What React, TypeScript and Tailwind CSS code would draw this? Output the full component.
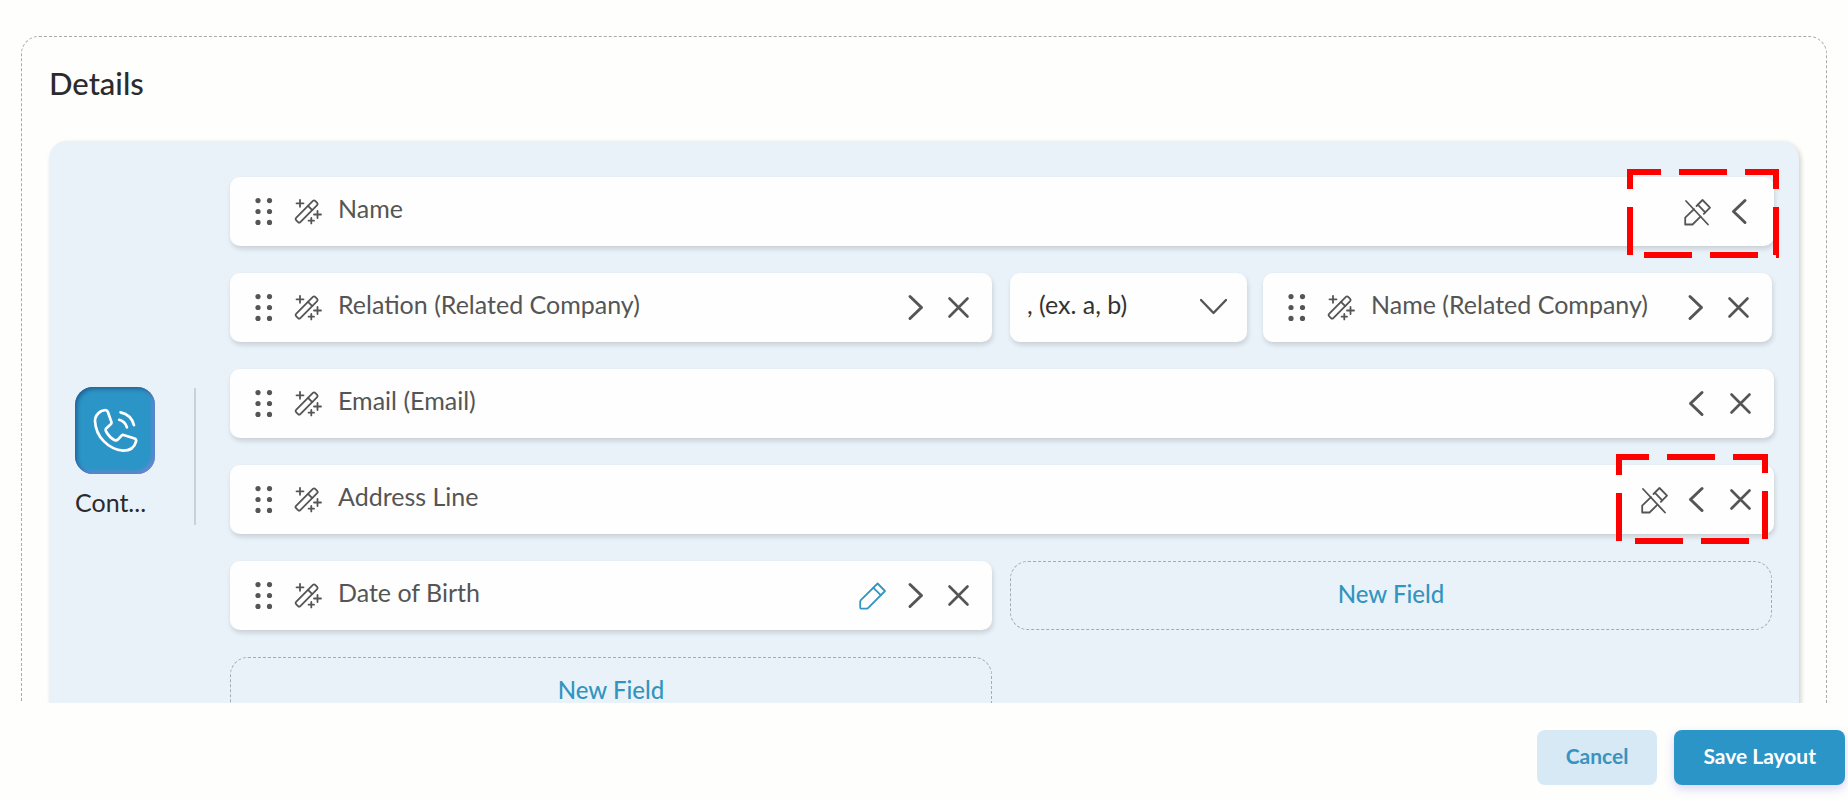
import type { ReactNode } from 'react';

type Action = 'locked' | 'edit' | 'expand' | 'shrink' | 'remove';

const iconProps = {
  viewBox: '0 0 27 27',
  fill: 'none',
  stroke: 'currentColor',
  strokeLinecap: 'round' as const,
  strokeLinejoin: 'round' as const,
  'aria-hidden': true,
};

function DragIcon() {
  return (
    <svg {...iconProps} stroke="none" fill="currentColor" className="size-[27px] shrink-0">
      {[2.6, 13.5, 24.4].map((y) => (
        <g key={y}>
          <circle cx="8" cy={y} r="2.6" />
          <circle cx="19.5" cy={y} r="2.6" />
        </g>
      ))}
    </svg>
  );
}

function WandIcon() {
  return (
    <svg {...iconProps} strokeWidth="1.8" className="size-[27px] shrink-0 overflow-visible">
      <g transform="translate(12.6 13.5) rotate(-45)">
        <rect x="-13.5" y="-3" width="27" height="6" rx="1.6" />
        <path d="M5 -3v6" />
      </g>
      <path d="M6 1.8v7M2.5 5.3h7" />
      <path d="M23.5 13v7M20 16.5h7" />
      <path d="M17.3 20v5.4M14.6 22.7H20" />
    </svg>
  );
}

const actions: Record<Action, { label: string; icon: ReactNode }> = {
  locked: {
    label: 'Editing disabled',
    icon: (
      <g strokeWidth="1.8">
        <path d="M2 3L24 26.5" />
        <path d="M10 11.2L1.2 19.7V26.5H8.5L16.5 18.7" />
        <path d="M12.5 8L18.5 2L26 9.7L19.8 15.8" />
        <path d="M14 6.8L21.2 14.4" />
      </g>
    ),
  },
  edit: {
    label: 'Edit field',
    icon: (
      <g strokeWidth="1.8" className="text-[#3295c6]">
        <path stroke="currentColor" d="M18.6 1.5L26 9L9 26.2L8 26.6H2.2Q1.2 26.6 1.2 25.6V19.4L1.8 18.2Z" />
        <path stroke="currentColor" d="M14.4 5.8L21.8 13.2" />
      </g>
    ),
  },
  expand: { label: 'Expand field', icon: <path strokeWidth="3" d="M8 2.5L19.5 13.5L8 24.5" /> },
  shrink: { label: 'Shrink field', icon: <path strokeWidth="3" d="M18 2.5L6.5 13.5L18 24.5" /> },
  remove: { label: 'Remove field', icon: <path strokeWidth="2.6" d="M4.5 4.5L22.5 22.5M22.5 4.5L4.5 22.5" /> },
};

interface FieldCardProps {
  label: string;
  actions: Action[];
  children?: ReactNode;
}

function FieldCard({ label, actions: list, children }: FieldCardProps) {
  return (
    <div className="relative flex h-[69px] min-w-0 flex-1 items-center gap-[17px] rounded-[10px] bg-[#fefefe] px-5 text-[#555] shadow-[1px_3px_5px_rgba(0,0,0,0.14)]">
      <DragIcon />
      <WandIcon />
      <span className="min-w-0 flex-1 whitespace-nowrap pb-2 text-[25px] leading-8">{label}</span>
      <div className="flex gap-4">
        {list.map((name) => (
          <button key={name} type="button" aria-label={actions[name].label} className="size-[27px] shrink-0">
            <svg {...iconProps} className="size-[27px] overflow-visible">
              {actions[name].icon}
            </svg>
          </button>
        ))}
      </div>
      {children}
    </div>
  );
}

function NewField() {
  return (
    <button
      type="button"
      className="h-[69px] min-w-0 rounded-[18px] border border-dashed border-[#a3adb0] pb-1 text-2xl font-medium text-[#3295c0]"
    >
      New Field
    </button>
  );
}

function SeparatorSelect() {
  return (
    <div className="relative w-[237px] shrink-0">
      <select
        aria-label="Separator"
        className="h-[69px] w-full appearance-none rounded-[10px] bg-[#fefefe] pb-2 pl-[17px] pr-14 text-[25px] leading-8 text-[#333] shadow-[1px_3px_5px_rgba(0,0,0,0.14)]"
      >
        <option>, (ex. a, b)</option>
      </select>
      <svg {...iconProps} strokeWidth="2.4" className="pointer-events-none absolute right-5 top-5 size-[27px] text-[#555]">
        <path d="M1 7L13.5 20L26 7" />
      </svg>
    </div>
  );
}

export default function App() {
  return (
    <div className="flex h-screen flex-col bg-[#fefefd] font-[Lato,'Liberation_Sans',sans-serif]">
      <main className="min-h-0 flex-1 overflow-hidden px-[21px] pt-9">
        <section className="rounded-[18px] border border-dashed border-[#aaa] px-[27px] pb-8">
          <h2 className="pt-[26px] text-[31px] font-medium leading-10 text-[#2b2b2d]">Details</h2>

          <div className="mt-[38px] flex items-center rounded-[18px] bg-[#eaf2f9] pb-9 pl-[26px] pr-[25px] pt-9 shadow-[2px_2px_5px_rgba(0,0,0,0.18)]">
            {/* Module */}
            <div className="flex shrink-0 items-center">
              <div className="w-[119px] pb-1.5">
                <div className="flex h-[87px] w-20 items-center justify-center rounded-[18px] bg-[#2c95c7] text-white shadow-[inset_2px_2px_4px_#245f92,inset_-2px_-2px_4px_#7886d8]">
                  <svg viewBox="160 145 134 134" fill="none" stroke="currentColor" strokeWidth="8" strokeLinecap="round" strokeLinejoin="round" className="size-[45px]" aria-hidden>
                    <path d="M185 154L197 151Q202 151 204 156L215 187Q216 191 212 194L200 205Q196 210 199 215Q209 233 225 241Q230 243 234 239L245 227Q249 224 253 226L284 236Q290 239 288 245C283 264 270 272 250 272C205 268 168 230 166 184Q166 165 185 154Z" />
                    <path d="M238 180Q256 185 261 203M242 158Q274 165 282 196" />
                  </svg>
                </div>
                <p className="mt-2.5 text-[25px] leading-9 text-[#2b2b2d]">Cont...</p>
              </div>
              <div className="h-[137px] w-0.5 bg-[#cbd1d6]" />
            </div>

            {/* Field rows */}
            <div className="ml-[34px] flex min-w-0 flex-1 flex-col gap-[27px] pb-2.5">
              <div className="flex">
                <FieldCard label="Name" actions={['locked', 'shrink']}>
                  <svg className="pointer-events-none absolute -right-[5px] -top-2 h-[90px] w-[152px]" viewBox="0 0 152 90" fill="none" stroke="red" strokeWidth="6" aria-hidden>
                    <path d="M3 20V3H34M52 3H100M118 3H149V20M149 38V86M3 38V86M17 86H65M83 86H131" />
                    <path d="M150.5 85V89" strokeWidth="3" />
                  </svg>
                </FieldCard>
              </div>
              <div className="grid grid-cols-2 gap-[18px] pr-0.5">
                <FieldCard label="Relation (Related Company)" actions={['expand', 'remove']} />
                <div className="flex min-w-0 gap-4">
                  <SeparatorSelect />
                  <FieldCard label="Name (Related Company)" actions={['expand', 'remove']} />
                </div>
              </div>
              <div className="flex">
                <FieldCard label="Email (Email)" actions={['shrink', 'remove']} />
              </div>
              <div className="flex">
                <FieldCard label="Address Line" actions={['locked', 'shrink', 'remove']}>
                  <svg className="pointer-events-none absolute -top-[11px] right-1.5 h-[90px] w-[152px]" viewBox="0 0 152 90" fill="none" stroke="red" strokeWidth="6" aria-hidden>
                    <path d="M3 21V3H33M51 3H99M117 3H149V19M149 37V85M3 39V87M19 87H67M85 87H133" />
                  </svg>
                </FieldCard>
              </div>
              <div className="grid grid-cols-2 gap-[18px] pr-0.5">
                <FieldCard label="Date of Birth" actions={['edit', 'expand', 'remove']} />
                <NewField />
              </div>
              <div className="grid grid-cols-2 gap-[18px] pr-0.5">
                <NewField />
              </div>
            </div>
          </div>
        </section>
      </main>

      <footer className="flex justify-end gap-[17px] pb-[15px] pr-[3px] pt-[27px]">
        <button type="button" className="h-[55px] rounded-lg bg-[#d6e9f4] px-[29px] pb-1 text-[21px] font-bold text-[#3a93bf]">
          Cancel
        </button>
        <button type="button" className="h-[55px] rounded-lg bg-[#2c95c7] px-[29px] pb-1 text-[21px] font-bold text-white shadow-[0_4px_10px_rgba(120,90,220,0.25)]">
          Save Layout
        </button>
      </footer>
    </div>
  );
}
